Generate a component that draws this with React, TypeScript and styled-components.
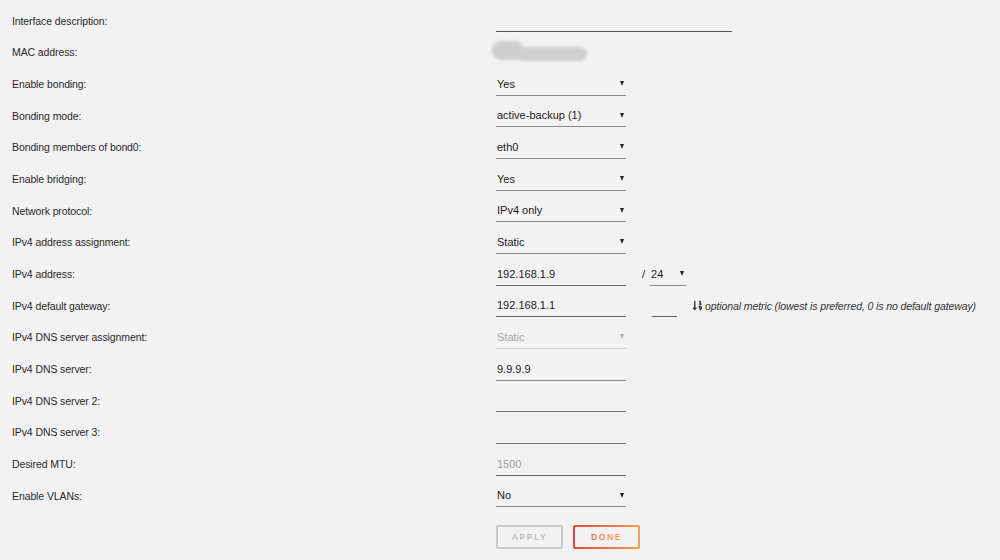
import styled, { createGlobalStyle } from "styled-components";
import { FaSortNumericDown } from "react-icons/fa";

const GlobalStyle = createGlobalStyle`
  html, body {
    margin: 0;
    padding: 0;
    background: #f2f2f2;
  }
  body {
    font-family: "Liberation Sans", Arial, sans-serif;
    font-size: 11px;
    color: #333;
  }
`;

const Page = styled.div`
  width: 1000px;
  height: 560px;
  padding: 5px 0 0 12px;
  box-sizing: border-box;
  overflow: hidden;
`;

const Row = styled.div`
  display: grid;
  grid-template-columns: 484px auto;
  align-items: center;
  height: 31.67px;
`;

const Label = styled.div`
  font-size: 10.5px;
  letter-spacing: -0.1px;
  color: #2a2a2a;
`;

const Controls = styled.div`
  display: flex;
  align-items: center;
`;

const TextInput = styled.input<{ w?: number; line?: string }>`
  width: ${(p) => p.w ?? 130}px;
  height: 23px;
  box-sizing: border-box;
  padding: 0 1px;
  margin: 0;
  border: none;
  border-bottom: 1px solid ${(p) => p.line ?? "#666"};
  background: transparent;
  font-family: "Liberation Sans", Arial, sans-serif;
  font-size: 11px;
  color: #222;
  outline: none;

  &::placeholder {
    color: #a0a0a0;
  }
`;

const Select = styled.div<{ w?: number; disabled?: boolean }>`
  width: ${(p) => p.w ?? 130}px;
  height: 23px;
  box-sizing: border-box;
  padding: 0 2px 0 1px;
  display: flex;
  align-items: center;
  justify-content: space-between;
  border-bottom: 1px solid ${(p) => (p.disabled ? "#cfcfcf" : "#888")};
  color: ${(p) => (p.disabled ? "#a6a6a6" : "#222")};
  font-size: 11px;
`;

const Arrow = styled.span<{ disabled?: boolean }>`
  width: 0;
  height: 0;
  border-left: 2.5px solid transparent;
  border-right: 2.5px solid transparent;
  border-top: 5px solid ${(p) => (p.disabled ? "#aaa" : "#222")};
`;

const Slash = styled.span`
  margin: 0 5px 0 16px;
  color: #222;
  font-size: 11px;
`;

const Blur = styled.div`
  position: relative;
  width: 100px;
  height: 22px;
  margin-left: -4px;
`;

const BlurPart = styled.span<{ l: number; t: number; w: number; h: number }>`
  position: absolute;
  left: ${(p) => p.l}px;
  top: ${(p) => p.t}px;
  width: ${(p) => p.w}px;
  height: ${(p) => p.h}px;
  border-radius: 9px;
  background: #cfcfcf;
  filter: blur(1.5px);
`;

const Hint = styled.span`
  display: flex;
  align-items: center;
  gap: 2px;
  margin-left: 15px;
  font-style: italic;
  font-size: 10.5px;
  color: #333;
  letter-spacing: -0.1px;

  svg {
    width: 11px;
    height: 11px;
    color: #333;
  }
`;

const ButtonBar = styled.div`
  display: flex;
  gap: 10px;
  margin: 13px 0 0 484px;
`;

const Button = styled.button<{ primary?: boolean }>`
  width: 67px;
  height: 24px;
  box-sizing: border-box;
  border-radius: 2px;
  font-family: "Liberation Sans", Arial, sans-serif;
  font-size: 8.5px;
  font-weight: bold;
  letter-spacing: 1.6px;
  cursor: pointer;
  padding: 0;
  border: 2px solid ${(p) => (p.primary ? "transparent" : "#c9c9c9")};
  color: ${(p) => (p.primary ? "#f07a4a" : "#bdbdbd")};
  background: ${(p) =>
    p.primary
      ? "linear-gradient(#f2f2f2, #f2f2f2) padding-box, linear-gradient(90deg, #e8434b, #f99d4d) border-box"
      : "transparent"};
`;

const GradText = styled.span`
  background: linear-gradient(90deg, #ef6a48, #f9a04c);
  -webkit-background-clip: text;
  background-clip: text;
  -webkit-text-fill-color: transparent;
`;

type Field =
  | { label: string; kind: "text"; value?: string; w?: number; placeholder?: string; line?: string }
  | { label: string; kind: "select"; value: string; disabled?: boolean }
  | { label: string; kind: "mac" }
  | { label: string; kind: "address" }
  | { label: string; kind: "gateway" };

const fields: Field[] = [
  { label: "Interface description:", kind: "text", w: 236, line: "#555" },
  { label: "MAC address:", kind: "mac" },
  { label: "Enable bonding:", kind: "select", value: "Yes" },
  { label: "Bonding mode:", kind: "select", value: "active-backup (1)" },
  { label: "Bonding members of bond0:", kind: "select", value: "eth0" },
  { label: "Enable bridging:", kind: "select", value: "Yes" },
  { label: "Network protocol:", kind: "select", value: "IPv4 only" },
  { label: "IPv4 address assignment:", kind: "select", value: "Static" },
  { label: "IPv4 address:", kind: "address" },
  { label: "IPv4 default gateway:", kind: "gateway" },
  { label: "IPv4 DNS server assignment:", kind: "select", value: "Static", disabled: true },
  { label: "IPv4 DNS server:", kind: "text", value: "9.9.9.9", line: "#888" },
  { label: "IPv4 DNS server 2:", kind: "text", line: "#777" },
  { label: "IPv4 DNS server 3:", kind: "text", line: "#777" },
  { label: "Desired MTU:", kind: "text", placeholder: "1500", line: "#666" },
  { label: "Enable VLANs:", kind: "select", value: "No" },
];

function Control({ field }: { field: Field }) {
  switch (field.kind) {
    case "text":
      return (
        <TextInput
          w={field.w}
          line={field.line}
          defaultValue={field.value}
          placeholder={field.placeholder}
        />
      );
    case "select":
      return (
        <Select disabled={field.disabled}>
          {field.value}
          <Arrow disabled={field.disabled} />
        </Select>
      );
    case "mac":
      return (
        <Blur>
          <BlurPart l={0} t={0} w={32} h={19} />
          <BlurPart l={24} t={6} w={71} h={14} />
        </Blur>
      );
    case "address":
      return (
        <>
          <TextInput defaultValue="192.168.1.9" />
          <Slash>/</Slash>
          <Select w={36}>
            24
            <Arrow />
          </Select>
        </>
      );
    case "gateway":
      return (
        <>
          <TextInput defaultValue="192.168.1.1" />
          <TextInput w={25} style={{ marginLeft: 26 }} />
          <Hint>
            <FaSortNumericDown />
            optional metric (lowest is preferred, 0 is no default gateway)
          </Hint>
        </>
      );
  }
}

export default function App() {
  return (
    <Page>
      <GlobalStyle />
      {fields.map((f) => (
        <Row key={f.label}>
          <Label>{f.label}</Label>
          <Controls>
            <Control field={f} />
          </Controls>
        </Row>
      ))}
      <ButtonBar>
        <Button>APPLY</Button>
        <Button primary>
          <GradText>DONE</GradText>
        </Button>
      </ButtonBar>
    </Page>
  );
}
